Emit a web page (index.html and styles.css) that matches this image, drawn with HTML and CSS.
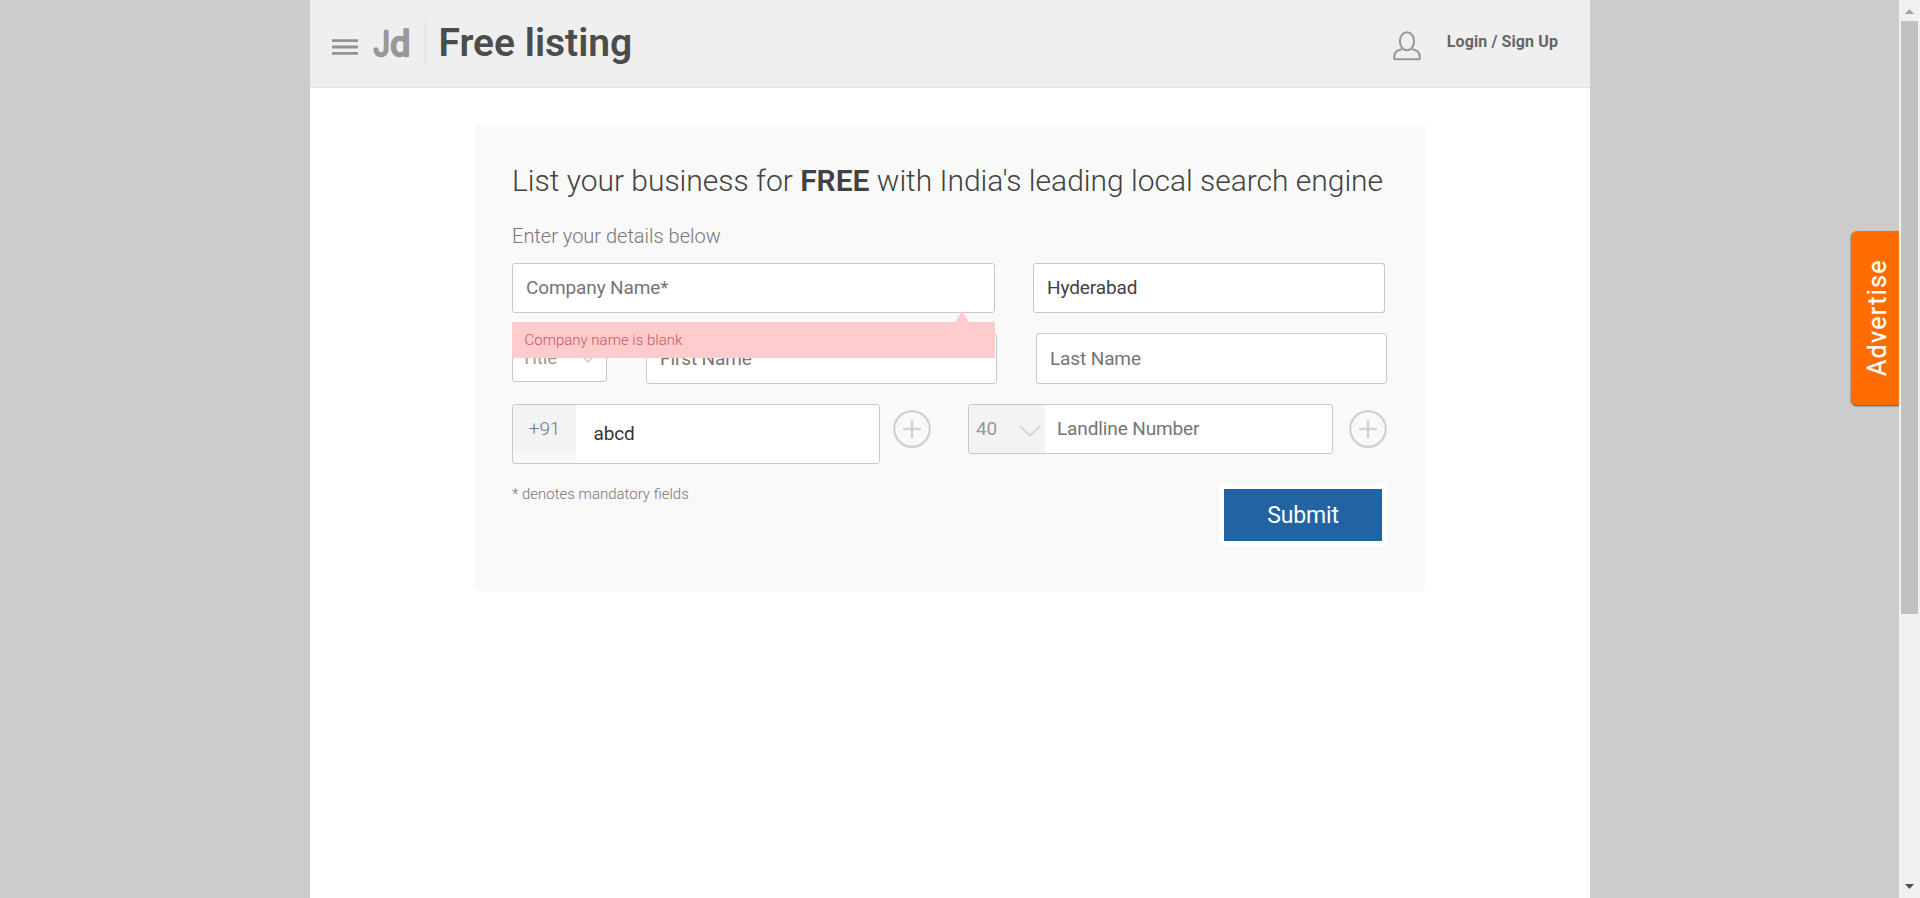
FILE: index.html
```html
<!DOCTYPE html>
<html lang="en">
<head>
<meta charset="utf-8">
<title>Free listing</title>
<link rel="stylesheet" href="styles.css">
</head>
<body>
<div class="viewport">
  <div class="page">
    <header class="header">
      <svg class="menu" viewBox="0 0 26 17"><path d="M1 1.6h24M1 8h24M1 14.4h24" stroke="#929292" stroke-width="2.8" stroke-linecap="round"/></svg>
      <svg class="logo" viewBox="0 0 44 52"><text class="logo-text" x="0.700" y="38" textLength="16" lengthAdjust="spacingAndGlyphs">J</text><text class="logo-text" x="17.200" y="38" textLength="20" lengthAdjust="spacingAndGlyphs">d</text></svg>
      <h1 class="title">Free listing</h1>
      <a class="account">
        <svg class="user" viewBox="0 0 28 30" fill="none" stroke="#999" stroke-width="2.1"><ellipse cx="14" cy="10.3" rx="7.1" ry="9"/><path d="M9 18.2C4 18.8 1.2 22 1.2 26v1.3q0 .9.9.9h23.800q.9 0 .9-.9V26c0-4-2.800-7.200-7.800-7.800"/></svg>
        <span class="login">Login / Sign Up</span>
      </a>
    </header>
    <main class="card">
      <h2 class="heading">List your business for <b>FREE</b> with India's leading local search engine</h2>
      <p class="sub">Enter your details below</p>
      <div class="row row-company">
        <div class="field company">Company Name*
          <div class="error">Company name is blank</div>
        </div>
        <div class="field city">Hyderabad</div>
      </div>
      <div class="row row-name">
        <div class="field salutation"><span>Title</span><svg class="chev-s" viewBox="0 0 14 8" fill="none" stroke="#d2d3d5" stroke-width="1.8"><path d="M1 .8l6 6 6-6"/></svg></div>
        <div class="field name">First Name</div>
        <div class="field name last">Last Name</div>
      </div>
      <div class="row row-phone">
        <div class="field mobile"><span class="prefix">+91</span><span class="number">abcd</span></div>
        <svg class="plus" viewBox="0 0 38 38" fill="none" stroke="#d0d1d4" stroke-width="2.3"><circle cx="19" cy="19" r="17.800"/><path d="M19 10v18M10 19h18"/></svg>
        <div class="field landline"><span class="code"><span>40</span><svg class="chev" viewBox="0 0 22 12" fill="none" stroke="#d2d3d5" stroke-width="1.800"><path d="M.7.8L11 10.500 21.300.8"/></svg></span><span class="land-text">Landline Number</span></div>
        <svg class="plus plus-last" viewBox="0 0 38 38" fill="none" stroke="#d0d1d4" stroke-width="2.3"><circle cx="19" cy="19" r="17.800"/><path d="M19 10v18M10 19h18"/></svg>
      </div>
      <div class="row row-submit">
        <p class="note">* denotes mandatory fields</p>
        <button class="submit">Submit</button>
      </div>
    </main>
  </div>
  <a class="advertise"><span>Advertise</span></a>
  <div class="scrollbar">
    <svg class="arrow" viewBox="0 0 21 21"><path d="M6 14h9l-4.500-5z" fill="#a3a3a3"/></svg>
    <div class="thumb"></div>
    <svg class="arrow" viewBox="0 0 21 21"><path d="M6 7h9l-4.500 5z" fill="#505050"/></svg>
  </div>
</div>
</body>
</html>
```
FILE: styles.css
```css
* { box-sizing: border-box; }
body { margin: 0; background: #ccc; font-family: Roboto, "Liberation Sans", sans-serif; overflow: hidden; }
h1, h2, p { margin: 0; }
svg { display: block; flex: none; }
.viewport { position: relative; display: flex; height: 898px; padding-left: 310px; }
.page { width: 1280px; background: #fff; }
.header { display: flex; align-items: flex-start; height: 88px; padding-left: 22px; background: #efefef; border-bottom: 1px solid #e2e2e2; }
.menu { width: 26px; height: 17px; margin-top: 39px; }
.logo { width: 44px; height: 52px; margin: 18px 8px 0 15px; overflow: visible; }
.logo-text { font-size: 35px; font-weight: 400; fill: #989898; stroke: #989898; stroke-width: 2.4px; stroke-linejoin: round; }
.title { height: 46px; margin-top: 20px; padding-left: 12.5px; border-left: 1px solid #e0e0e0; font-size: 39px; line-height: 46px; font-weight: 600; color: #4c4c4c; white-space: nowrap; }
.account { display: flex; margin-left: auto; padding-right: 32px; color: #666; }
.user { width: 28px; height: 30px; margin-top: 31px; }
.login { margin: 32px 0 0 26px; font-size: 16px; line-height: 20px; font-weight: 700; letter-spacing: .1px; }
.card { width: 950px; height: 466px; margin: 37px 0 0 165px; padding: 38px 37px 0 37px; background: #f9f9f9; }
.heading { height: 36px; font-size: 30px; line-height: 36px; font-weight: 300; letter-spacing: -.015px; color: #414141; white-space: nowrap; }
.heading b { font-weight: 600; }
.sub { margin: 25px 0 0; font-size: 20px; line-height: 24px; font-weight: 300; color: #777; }
.row { display: flex; align-items: flex-start; }
.field { display: flex; flex: none; align-items: center; height: 50px; border: 1px solid #c8c8c8; border-radius: 3px; background: #fff; font-size: 19px; line-height: 24px; letter-spacing: -.12px; color: #757575; }
.row-company { margin-top: 15px; }
.company { position: relative; width: 483px; padding-left: 13px; }
.city { width: 352px; margin-left: 38px; padding-left: 13px; color: #414141; }
.error { position: absolute; z-index: 1; left: -1px; top: 58px; width: 483px; height: 36px; padding-left: 12.5px; background: #ffcbcd; color: #c7575c; font-size: 15px; line-height: 36px; font-weight: 300; letter-spacing: 0; }
.error::before { content: ""; position: absolute; left: 443px; top: -11px; border: 7px solid transparent; border-top: 0; border-bottom: 11px solid #ffcbcd; }
.row-name { margin-top: 20px; }
.salutation { width: 95px; height: 49px; padding: 0 11px 0 8px; justify-content: space-between; color: #999; }
.chev-s { width: 14px; height: 8px; margin-top: 2px; }
.name { width: 351px; height: 51px; margin-left: 39px; padding-left: 13px; }
.row-phone { margin-top: 20px; }
.mobile { width: 368px; height: 60px; align-items: flex-start; overflow: hidden; background: #f9f9f9; }
.prefix { width: 63px; height: 48px; background: #f2f3f5; color: #777; font-weight: 300; line-height: 47px; text-align: center; }
.number { flex: 1; height: 58px; padding-left: 17.5px; background: #fff; color: #333; line-height: 57px; }
.plus { width: 38px; height: 38px; margin: 6px 0 0 13px; }
.landline { width: 365px; margin-left: 37px; overflow: hidden; }
.code { display: flex; align-items: center; width: 76px; height: 48px; padding: 0 4px 0 7px; justify-content: space-between; background: #f2f3f5; color: #999; }
.chev { width: 22px; height: 12px; margin-top: 4px; }
.land-text { padding-left: 12px; }
.plus-last { margin-left: 16px; }
.row-submit { width: 875px; margin-top: 20px; justify-content: space-between; }
.note { font-size: 15px; line-height: 20px; font-weight: 300; color: #777; }
.submit { width: 168px; height: 62px; padding: 1px 0 0; border: 5px solid #fff; border-radius: 3px; background: #2264a2; background-clip: padding-box; color: #fff; font: 400 23px/51px Roboto, "Liberation Sans", sans-serif; letter-spacing: -.15px; }
.advertise { position: absolute; left: 1851px; top: 231px; display: flex; justify-content: center; width: 48px; height: 174px; padding-left: 6px; background: #ff6c00; border-radius: 6px 0 0 6px; box-shadow: 0 1px 2px #444; clip-path: inset(-3px 0 -4px -3px); color: #fff; }
.advertise span { writing-mode: vertical-rl; transform: rotate(180deg); font-size: 25px; line-height: 42px; letter-spacing: 1.3px; text-align: center; -webkit-text-stroke: .3px #fff; }
.scrollbar { display: flex; flex-direction: column; width: 21px; margin-left: auto; background: #f1f1f1; }
.arrow { width: 21px; height: 21px; }
.thumb { width: 17px; height: 593px; margin: 0 auto auto 2px; background: #c1c1c1; }
```
